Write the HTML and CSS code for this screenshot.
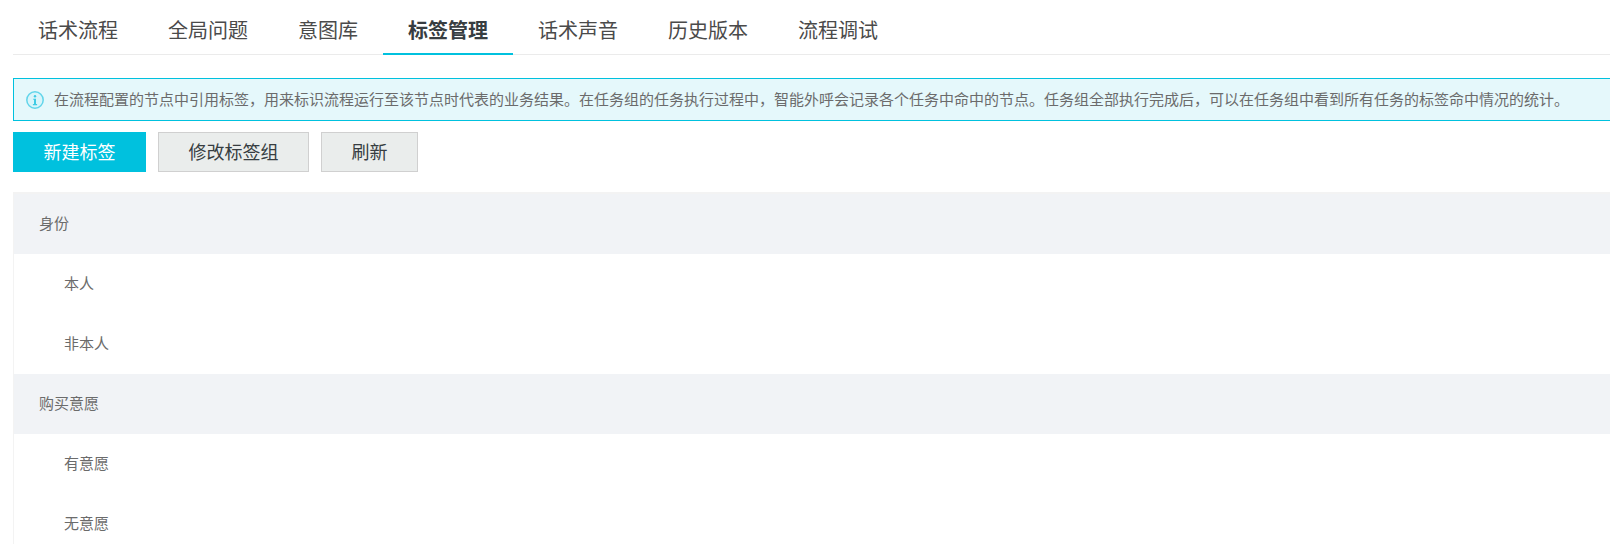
FILE: index.html
```html
<!DOCTYPE html>
<html lang="zh-CN">
<head>
<meta charset="utf-8">
<title>标签管理</title>
<link rel="stylesheet" href="styles.css">
</head>
<body>
<div class="page">
  <nav class="tabs">
    <a class="tab">话术流程</a>
    <a class="tab">全局问题</a>
    <a class="tab">意图库</a>
    <a class="tab active">标签管理</a>
    <a class="tab">话术声音</a>
    <a class="tab">历史版本</a>
    <a class="tab">流程调试</a>
  </nav>
  <div class="notice">
    <svg class="notice-icon" viewBox="0 0 20 20" width="20" height="20" aria-hidden="true">
      <circle cx="10" cy="10" r="8.2" fill="#d9f5fa" stroke="#62d5ea" stroke-width="1.5"/>
      <circle cx="10" cy="6.2" r="1.2" fill="#3fcbe4"/>
      <path d="M8.2 8.7h2.8v5.4h1.1v1.1H7.9v-1.1h1.1v-4.3h-.8z" fill="#3fcbe4"/>
    </svg>
    <span class="notice-text">在流程配置的节点中引用标签，用来标识流程运行至该节点时代表的业务结果。在任务组的任务执行过程中，智能外呼会记录各个任务中命中的节点。任务组全部执行完成后，可以在任务组中看到所有任务的标签命中情况的统计。</span>
  </div>
  <div class="actions">
    <button class="btn primary">新建标签</button>
    <button class="btn">修改标签组</button>
    <button class="btn">刷新</button>
  </div>
  <div class="tag-list">
    <div class="row group">身份</div>
    <div class="row child">本人</div>
    <div class="row child">非本人</div>
    <div class="row group">购买意愿</div>
    <div class="row child">有意愿</div>
    <div class="row child">无意愿</div>
  </div>
</div>
</body>
</html>
```
FILE: styles.css
```css
html, body {
  margin: 0;
  padding: 0;
  height: 544px;
  overflow: hidden;
  background: #fff;
}
.page {
  width: 1700px;
  padding-left: 13px;
  font-family: "Noto Sans CJK SC", "Liberation Sans", sans-serif;
}
.tabs {
  display: flex;
  height: 54px;
  border-bottom: 1px solid #ebebeb;
  box-sizing: content-box;
}
.tab {
  padding: 0 25px;
  height: 54px;
  line-height: 60px;
  font-size: 20px;
  color: #4a4a4a;
  box-sizing: border-box;
}
.tab.active {
  font-weight: 700;
  color: #373d41;
  border-bottom: 2px solid #00c1de;
  height: 55px;
}
.notice {
  display: flex;
  align-items: center;
  height: 43px;
  box-sizing: border-box;
  margin-top: 23px;
  padding-left: 11px;
  background: #e5f8fb;
  border: 1px solid #00c1de;
}
.notice-icon {
  flex: none;
  margin-right: 9px;
}
.notice-text {
  padding-bottom: 2px;
  font-size: 15px;
  color: #6b6b6b;
  white-space: nowrap;
}
.actions {
  display: flex;
  gap: 12px;
  margin-top: 11px;
}
.btn {
  height: 40px;
  padding: 0 29.5px 3px;
  font-family: inherit;
  font-size: 18px;
  color: #373d41;
  background: #eaedec;
  border: 1px solid #d0d0d0;
  box-sizing: border-box;
}
.btn.primary {
  background: #00c1de;
  border-color: #00c1de;
  color: #fff;
}
.tag-list {
  margin-top: 20px;
  border-top: 2px solid #f3f3f3;
  border-left: 1px solid #f3f3f3;
}
.row {
  height: 60px;
  line-height: 57px;
  font-size: 15px;
  color: #6b6b6b;
}
.group {
  padding-left: 25px;
  background: #f1f3f6;
}
.child {
  padding-left: 50px;
  background: #fff;
}
```
